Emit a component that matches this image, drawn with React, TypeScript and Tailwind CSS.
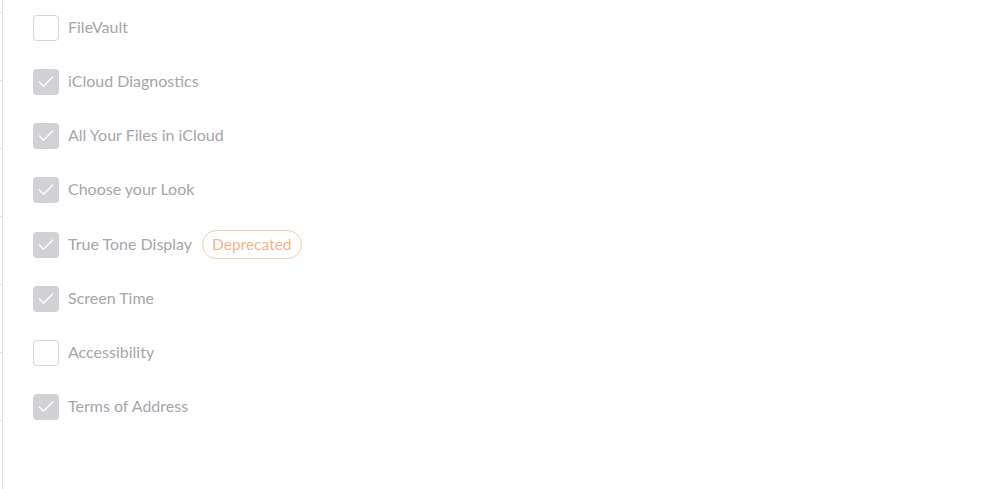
import { Check } from 'lucide-react';

type Item = { label: string; checked: boolean; deprecated?: boolean };

const items: Item[] = [
  { label: 'FileVault', checked: false },
  { label: 'iCloud Diagnostics', checked: true },
  { label: 'All Your Files in iCloud', checked: true },
  { label: 'Choose your Look', checked: true },
  { label: 'True Tone Display', checked: true, deprecated: true },
  { label: 'Screen Time', checked: true },
  { label: 'Accessibility', checked: false },
  { label: 'Terms of Address', checked: true },
];

export default function App() {
  return (
    <div
      className="flex h-[489px] w-[999px] overflow-hidden bg-white"
      style={{ fontFamily: 'Lato, "Open Sans", sans-serif' }}
    >
      {/* Sidebar edge, mostly scrolled out of view */}
      <div className="flex w-[3px] shrink-0 flex-col border-r border-[#e3e3e6]">
        <div className="h-[13px] shrink-0 border-b border-[#e3e3e6]" />
        {Array.from({ length: 6 }).map((_, i) => (
          <div key={i} className="h-[68px] shrink-0 border-b border-[#e3e3e6]" />
        ))}
      </div>

      {/* Options list */}
      <div className="flex flex-col pl-[30px] pt-[15px]">
        {items.map(item => (
          <label key={item.label} className="flex h-[54.15px] shrink-0 items-start gap-[9px]">
            <span
              className={`flex h-[26px] w-[26px] shrink-0 items-center justify-center rounded-[4px] ${
                item.checked ? 'bg-[#d1d1d6]' : 'border border-[#d6d6da] bg-white'
              }`}
            >
              {item.checked && <Check size={20} strokeWidth={1.6} className="text-white" />}
            </span>
            <span className="flex h-[26px] items-center gap-[10px] text-[16px] leading-none text-[#a6a6ab]">
              <span className="-mt-[2px]">{item.label}</span>
              {item.deprecated && (
                <span className="flex h-[29px] items-center rounded-full border border-[#f8c9ad] px-[9px] text-[15.5px] text-[#f6b48e]">
                  Deprecated
                </span>
              )}
            </span>
          </label>
        ))}
      </div>
    </div>
  );
}
